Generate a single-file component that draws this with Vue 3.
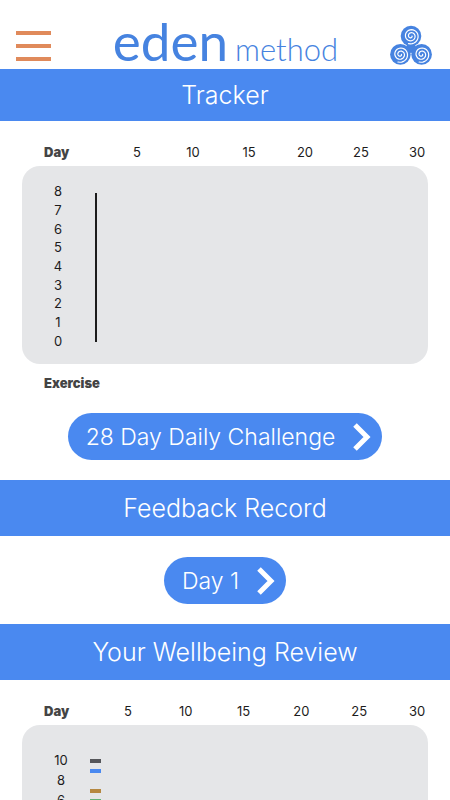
<script setup>

    // Marcas del eje horizontal
    const days = [5, 10, 15, 20, 25, 30];

    // Niveles del eje vertical de ejercicios
    const exerciseLevels = [8, 7, 6, 5, 4, 3, 2, 1, 0];

    // Niveles del eje vertical de bienestar
    const wellbeingLevels = [10, 8, 6];

    // Puntuaciones registradas, una fila por nivel
    const scores = [
        { level: 10, color: '#55565a' },
        { level: 9, color: '#4a89f0' },
        { level: 8, color: 'transparent' },
        { level: 7, color: '#b58841' },
        { level: 6, color: '#62b277' },
    ];

    // Centros de las espirales del icono
    const coils = [
        { x: 21, y: 11 },
        { x: 10.4, y: 29.4 },
        { x: 31.6, y: 29.4 },
    ];

    /**
     * Genera el trazado de una espiral
     * @function
     * @name spiralPath
     * @returns {string}
     */
    const spiralPath = (cx, cy) => {
        const points = [];
        for (let i = 0; i <= 60; i++) {
            const angle = i / 60 * Math.PI * 4.6;
            const radius = 1 + i / 60 * 7;
            const x = cx + radius * Math.cos(angle);
            const y = cy + radius * Math.sin(angle);
            points.push(`${x.toFixed(2)} ${y.toFixed(2)}`);
        }
        return 'M' + points.join('L');
    }

</script>

<template>
    <div class="page">

        <header class="top-bar">
            <button class="btn-menu" type="button" aria-label="Menu">
                <span class="menu-line"></span>
                <span class="menu-line"></span>
                <span class="menu-line"></span>
            </button>

            <div class="logo">
                <span class="logo-name">eden</span>
                <span class="logo-sub">method</span>
            </div>

            <a href="#" class="link-coils" aria-label="Home">
                <svg width="42" height="40" viewBox="0 0 42 40">
                    <circle cx="21" cy="23" r="5" fill="#4683e0" />
                    <g v-for="coil in coils" :key="coil.x">
                        <circle :cx="coil.x" :cy="coil.y" r="10.3" fill="#4683e0" />
                        <path :d="spiralPath(coil.x, coil.y)" fill="none" stroke="#ffffff" stroke-width="1.2" stroke-linecap="round" />
                    </g>
                </svg>
            </a>
        </header>

        <main>
            <h1 class="banner banner-first">Tracker</h1>

            <section class="chart">
                <div class="axis-days">
                    <strong class="axis-title">Day</strong>
                    <span v-for="day in days" :key="day" class="axis-day">{{ day }}</span>
                </div>
                <div class="panel">
                    <div class="levels">
                        <span v-for="level in exerciseLevels" :key="level" class="level">{{ level }}</span>
                    </div>
                    <div class="axis-line"></div>
                </div>
                <strong class="chart-caption">Exercise</strong>
            </section>

            <div class="wrapper-btn">
                <button class="btn-pill" type="button">
                    <span>28 Day Daily Challenge</span>
                    <svg width="18" height="28" viewBox="0 0 18 28">
                        <path d="M2 2L14 14L2 26" fill="none" stroke="#ffffff" stroke-width="5" />
                    </svg>
                </button>
            </div>

            <h2 class="banner">Feedback Record</h2>

            <div class="wrapper-btn">
                <button class="btn-pill" type="button">
                    <span>Day 1</span>
                    <svg width="18" height="28" viewBox="0 0 18 28">
                        <path d="M2 2L14 14L2 26" fill="none" stroke="#ffffff" stroke-width="5" />
                    </svg>
                </button>
            </div>

            <h2 class="banner">Your Wellbeing Review</h2>

            <section class="chart">
                <div class="axis-days axis-days-wide">
                    <strong class="axis-title">Day</strong>
                    <span v-for="day in days" :key="day" class="axis-day">{{ day }}</span>
                </div>
                <div class="panel panel-scores">
                    <div class="levels levels-scores">
                        <span v-for="level in wellbeingLevels" :key="level" class="level">{{ level }}</span>
                    </div>
                    <div class="scores">
                        <span v-for="score in scores" :key="score.level" class="score" :style="{ backgroundColor: score.color }"></span>
                    </div>
                </div>
            </section>
        </main>

    </div>
</template>

<style>
    html {
        scrollbar-width: none;
    }

    body {
        margin: 0;
        background-color: #ffffff;
    }
</style>

<style scoped>

    .page {
        font-family: Inter, "Liberation Sans", sans-serif;
        color: #1c1c1c;
    }

    .top-bar {
        display: flex;
        justify-content: space-between;
        align-items: flex-end;
        height: 69px;
        padding: 0 18px 0 16px;
        box-sizing: border-box;
    }

    .btn-menu {
        display: flex;
        flex-direction: column;
        gap: 9px;
        width: 35px;
        margin-bottom: 8px;
        padding: 0;
        border: none;
        background: none;
        cursor: pointer;
    }

    .menu-line {
        width: 100%;
        height: 4px;
        background-color: #e08a5b;
    }

    .logo {
        display: flex;
        align-items: baseline;
        gap: 7px;
        height: 60px;
        margin-left: 10px;
        color: #4683e0;
        font-family: Lato, Inter, sans-serif;
        line-height: 64px;
    }

    .logo-name {
        font-size: 53px;
        font-weight: 400;
    }

    .logo-sub {
        font-size: 31px;
        font-weight: 300;
    }

    .link-coils {
        display: flex;
        margin-bottom: 4px;
    }

    .banner {
        margin: 0;
        background-color: #4a89f0;
        color: #ffffff;
        font-size: 25px;
        font-weight: 300;
        line-height: 56px;
        text-align: center;
    }

    .banner-first {
        line-height: 52px;
    }

    .chart {
        padding-top: 17px;
    }

    .axis-days {
        display: grid;
        grid-template-columns: 65px repeat(6, 1fr);
        align-items: center;
        padding: 0 5px 0 44px;
        font-size: 13px;
        line-height: 28px;
    }

    .axis-days-wide {
        grid-template-columns: 55px repeat(6, 1fr);
        padding-right: 4px;
    }

    .axis-title,
    .chart-caption {
        color: #444444;
        font-size: 13px;
        font-weight: 900;
    }

    .axis-day {
        text-align: center;
    }

    .panel {
        display: flex;
        margin: 0 22px;
        padding: 16px 0 14px 26px;
        border-radius: 18px;
        background-color: #e5e6e8;
    }

    .panel-scores {
        padding-top: 25px;
    }

    .levels {
        display: grid;
        grid-auto-rows: 1fr;
        width: 20px;
        height: 168px;
        font-size: 13px;
    }

    .levels-scores {
        width: 26px;
        height: 60px;
    }

    .level {
        display: flex;
        align-items: center;
        justify-content: center;
    }

    .axis-line {
        width: 2px;
        margin: 11px 0 8px 27px;
        background-color: #1c1c1c;
    }

    .scores {
        display: flex;
        flex-direction: column;
        gap: 6px;
        margin: 9px 0 0 16px;
    }

    .score {
        width: 11px;
        height: 4px;
    }

    .chart-caption {
        display: block;
        margin-left: 44px;
        line-height: 38px;
    }

    .wrapper-btn {
        display: flex;
        justify-content: center;
        padding: 21px 0 20px;
    }

    .chart + .wrapper-btn {
        padding-top: 11px;
    }

    .btn-pill {
        display: flex;
        align-items: center;
        gap: 18px;
        height: 47px;
        padding: 0 11px 0 18px;
        border: none;
        border-radius: 24px;
        background-color: #4a89f0;
        color: #ffffff;
        font-family: inherit;
        font-size: 23px;
        font-weight: 300;
        cursor: pointer;
    }

</style>
